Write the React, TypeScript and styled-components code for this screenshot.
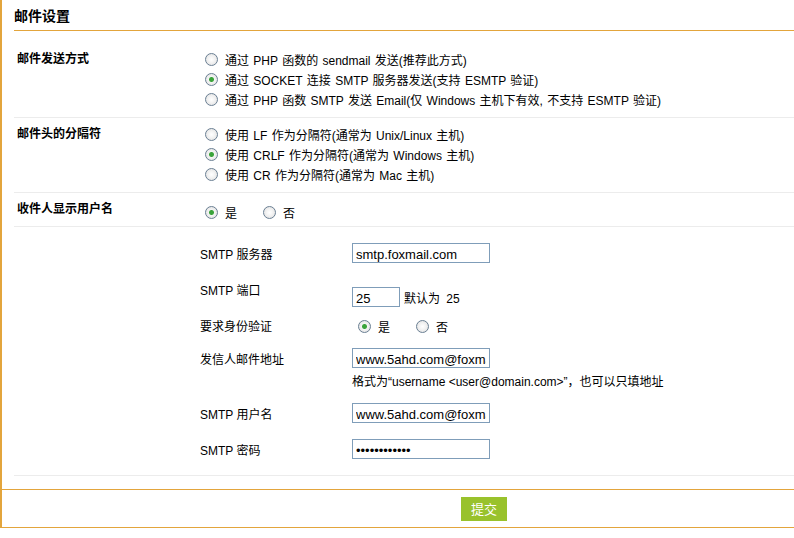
import React from 'react';
import styled, { createGlobalStyle } from 'styled-components';

const Global = createGlobalStyle`
  body {
    margin: 0;
    background: #fff;
    font-family: "Liberation Sans", Arial, "Noto Sans CJK SC", sans-serif;
    font-size: 12px;
    color: #000;
  }
`;

const Frame = styled.div`
  width: 794px;
  height: 528px;
  box-sizing: border-box;
  border-left: 2px solid #e3a53c;
  display: flex;
  flex-direction: column;
`;

const Head = styled.div`
  margin-left: 12px;
  height: 30px;
  border-bottom: 1px solid #e3a53c;
  display: flex;
  align-items: center;
  font-size: 14px;
  font-weight: bold;
`;

const Body = styled.div`
  flex: 1;
  padding: 12px 0 0 12px;
`;

const Row = styled.div<{ $h: number }>`
  display: flex;
  height: ${(p) => p.$h}px;
  border-bottom: 1px solid #ececec;
  padding-top: 8px;
  box-sizing: border-box;
`;

const Label = styled.div`
  width: 188px;
  padding-left: 3px;
  font-weight: bold;
  line-height: 16px;
`;

const Options = styled.div`
  display: flex;
  flex-direction: column;
  gap: 4px;
`;

const Opt = styled.label<{ $inline?: boolean }>`
  display: flex;
  align-items: center;
  gap: 7px;
  height: 16px;
  margin-right: ${(p) => (p.$inline ? '26px' : '0')};
  word-spacing: 1px;
`;

const Radio = styled.span<{ $on?: boolean }>`
  width: 11px;
  height: 11px;
  border-radius: 50%;
  border: 1px solid #6a7f93;
  background: radial-gradient(circle, ${(p) => (p.$on ? '#3aa33a 2px' : '#fff 0')}, #f4f4f4 3px, #dcdcdc);
  flex: none;
`;

const Inline = styled.div`
  display: flex;
`;

const Sub = styled.div`
  padding-left: 186px;
  border-bottom: 1px solid #ececec;
  height: 249px;
  box-sizing: border-box;
  padding-top: 16px;
`;

const SubRow = styled.div<{ $h: number }>`
  display: flex;
  height: ${(p) => p.$h}px;
`;

const SubLabel = styled.div`
  width: 152px;
  padding-top: 2px;
`;

const Field = styled.div`
  display: flex;
  flex-direction: column;
  gap: 4px;
`;

const FieldLine = styled.div`
  display: flex;
  align-items: center;
  gap: 4px;
`;

const Input = styled.input<{ $w?: number }>`
  width: ${(p) => p.$w ?? 138}px;
  height: 20px;
  box-sizing: border-box;
  border: 1px solid #7f9db9;
  padding: 3px 3px 0;
  font-family: "Liberation Sans", Arial, sans-serif;
  font-size: 13px;
  color: #000;
`;

const Foot = styled.div`
  height: 37px;
  border-top: 1px solid #e3a53c;
  border-bottom: 1px solid #e3a53c;
  display: flex;
  align-items: center;
  padding-left: 459px;
`;

const Submit = styled.button`
  width: 46px;
  height: 24px;
  background: #99c22c;
  border: none;
  color: #fff;
  font-size: 13px;
  font-family: inherit;
`;

export default function App() {
  return (
    <>
      <Global />
      <Frame>
        <Head>邮件设置</Head>
        <Body>
          <Row $h={75}>
            <Label>邮件发送方式</Label>
            <Options>
              <Opt><Radio />通过 PHP 函数的 sendmail 发送(推荐此方式)</Opt>
              <Opt><Radio $on />通过 SOCKET 连接 SMTP 服务器发送(支持 ESMTP 验证)</Opt>
              <Opt><Radio />通过 PHP 函数 SMTP 发送 Email(仅 Windows 主机下有效, 不支持 ESMTP 验证)</Opt>
            </Options>
          </Row>
          <Row $h={75}>
            <Label>邮件头的分隔符</Label>
            <Options>
              <Opt><Radio />使用 LF 作为分隔符(通常为 Unix/Linux 主机)</Opt>
              <Opt><Radio $on />使用 CRLF 作为分隔符(通常为 Windows 主机)</Opt>
              <Opt><Radio />使用 CR 作为分隔符(通常为 Mac 主机)</Opt>
            </Options>
          </Row>
          <Row $h={34}>
            <Label>收件人显示用户名</Label>
            <Inline style={{ paddingTop: 3 }}>
              <Opt $inline><Radio $on />是</Opt>
              <Opt><Radio />否</Opt>
            </Inline>
          </Row>
          <Sub>
            <SubRow $h={36}>
              <SubLabel>SMTP 服务器</SubLabel>
              <Input defaultValue="smtp.foxmail.com" />
            </SubRow>
            <SubRow $h={36}>
              <SubLabel>SMTP 端口</SubLabel>
              <FieldLine>
                <Input $w={48} defaultValue="25" />
                <span style={{ wordSpacing: 3 }}>默认为 25</span>
              </FieldLine>
            </SubRow>
            <SubRow $h={33}>
              <SubLabel>要求身份验证</SubLabel>
              <Inline style={{ paddingLeft: 6, paddingTop: 3 }}>
                <Opt $inline><Radio $on />是</Opt>
                <Opt><Radio />否</Opt>
              </Inline>
            </SubRow>
            <SubRow $h={55}>
              <SubLabel>发信人邮件地址</SubLabel>
              <Field>
                <Input defaultValue="www.5ahd.com@foxmail.com" />
                <span>格式为“username &lt;user@domain.com&gt;”，也可以只填地址</span>
              </Field>
            </SubRow>
            <SubRow $h={36}>
              <SubLabel>SMTP 用户名</SubLabel>
              <Input defaultValue="www.5ahd.com@foxmail.com" />
            </SubRow>
            <SubRow $h={36}>
              <SubLabel>SMTP 密码</SubLabel>
              <Input type="password" defaultValue="123456789012" />
            </SubRow>
          </Sub>
        </Body>
        <Foot>
          <Submit>提交</Submit>
        </Foot>
      </Frame>
    </>
  );
}
